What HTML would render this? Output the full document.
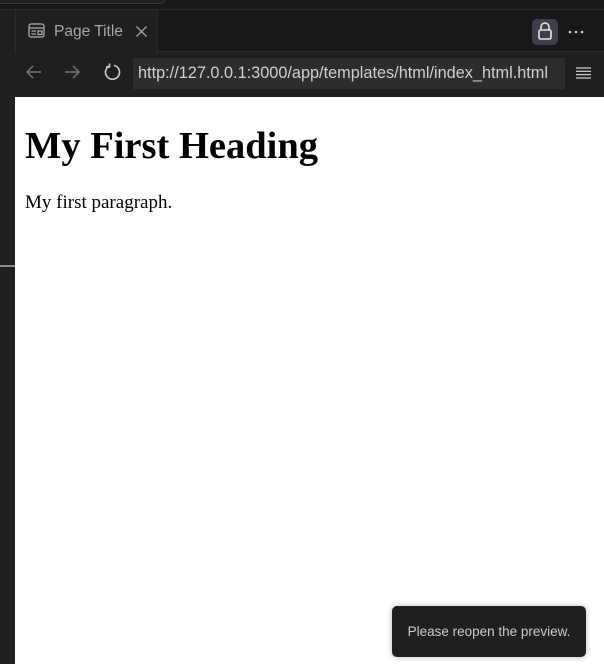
<!DOCTYPE html>
<html><head><style>
*{margin:0;padding:0;box-sizing:border-box}
body{width:604px;height:664px;overflow:hidden;background:#1f1f1f;position:relative;font-family:"Liberation Sans",sans-serif}
.top{position:absolute;left:0;top:0;width:604px;height:10px;background:#181818;border-bottom:1px solid #2b2b2b}
.topbox{position:absolute;left:-5px;top:-8px;width:170px;height:12px;border:1px solid #3a3a3a;border-radius:4px;background:#1f1f1f}
.side{position:absolute;left:0;top:10px;width:15px;height:654px;background:#1f1f1f}
.sideline{position:absolute;left:0;top:255px;width:15px;height:2px;background:#8a8a8a}
.tabbar{position:absolute;left:15px;top:10px;width:589px;height:42px;background:#181818;border-bottom:1px solid #2b2b2b}
.tab{position:absolute;left:15px;top:10px;width:143px;height:43px;background:#1f1f1f;border-left:1px solid #2b2b2b;border-right:1px solid #2b2b2b}
.tab span{position:absolute;left:38px;top:13px;color:#a8a8a8;font-size:15.5px}
.tb{position:absolute;left:15px;top:53px;width:589px;height:44px;background:#1f1f1f}
.url{position:absolute;left:133px;top:58px;width:432px;height:31px;background:#2d2d2d;color:#d0d0d0;font-size:16.3px;line-height:31px;padding-left:5px;white-space:nowrap;overflow:hidden}
.page{position:absolute;left:15px;top:97px;width:589px;height:567px;background:#fff;font-family:"Liberation Serif",serif;color:#000}
h1{position:absolute;left:10px;top:27px;font-size:38.5px;font-weight:bold;white-space:nowrap}
p{position:absolute;left:10px;top:95px;font-size:19px}
.toast{position:absolute;left:392px;top:606px;width:194px;height:51px;background:#1f1f1f;border-radius:5px;color:#cccccc;font-size:13.5px;line-height:51px;text-align:center;box-shadow:0 0 6px rgba(0,0,0,.3)}
</style></head><body>
<div class="top"><div class="topbox"></div></div>
<div class="side"><div class="sideline"></div></div>
<div class="tabbar"></div>
<div class="tab">
<svg style="position:absolute;left:12px;top:13px" width="17" height="16" viewBox="0 0 17 16" fill="none" stroke="#b0b0b0" stroke-width="1.2"><rect x="1" y="1" width="15" height="13" rx="2"/><line x1="1" y1="5" x2="16" y2="5"/><line x1="3.5" y1="8" x2="8" y2="8"/><line x1="3.5" y1="11" x2="8" y2="11"/><rect x="10" y="8" width="4" height="3.5"/></svg>
<span>Page Title</span>
<svg style="position:absolute;left:120px;top:16px" width="11" height="11" viewBox="0 0 11 11" stroke="#a0a0a0" stroke-width="1.3"><line x1="0.5" y1="0.5" x2="10.5" y2="10.5"/><line x1="10.5" y1="0.5" x2="0.5" y2="10.5"/></svg>
</div>
<div style="position:absolute;left:532px;top:19px;width:26px;height:26px;background:#3e3e4e;border-radius:5px"></div>
<svg style="position:absolute;left:537px;top:21px" width="16" height="20" viewBox="0 0 16 20" fill="none" stroke="#e8e4d8" stroke-width="1.6"><path d="M4 9V6a4 4 0 0 1 8 0v3"/><rect x="2" y="9" width="12" height="9" rx="1.5"/></svg>
<svg style="position:absolute;left:568px;top:30px" width="16" height="4" viewBox="0 0 16 4" fill="#d0d0d0"><circle cx="2" cy="2" r="1.3"/><circle cx="8" cy="2" r="1.3"/><circle cx="14" cy="2" r="1.3"/></svg>
<div class="tb"></div>
<svg style="position:absolute;left:25px;top:65px" width="17" height="14" viewBox="0 0 17 14" fill="none" stroke="#777" stroke-width="1.4"><path d="M16 7H2M8 1L2 7l6 6"/></svg>
<svg style="position:absolute;left:64px;top:65px" width="17" height="14" viewBox="0 0 17 14" fill="none" stroke="#777" stroke-width="1.4"><path d="M1 7h14M9 1l6 6-6 6"/></svg>
<svg style="position:absolute;left:103px;top:63px" width="18" height="18" viewBox="0 0 18 18" fill="none" stroke="#cfcfcf" stroke-width="1.6"><path d="M6 3.2A7 7 0 1 0 11 2.4"/><path d="M6.5 0.5v3.5H3"/></svg>
<div class="url">http://127.0.0.1:3000/app/templates/html/index_html.html</div>
<svg style="position:absolute;left:576px;top:67px" width="15" height="12" viewBox="0 0 15 12" stroke="#c8c8c8" stroke-width="1.3"><line x1="0" y1="1" x2="15" y2="1"/><line x1="0" y1="4.3" x2="15" y2="4.3"/><line x1="0" y1="7.6" x2="15" y2="7.6"/><line x1="0" y1="11" x2="15" y2="11"/></svg>
<div class="page"><h1>My First Heading</h1><p>My first paragraph.</p></div>
<div class="toast">Please reopen the preview.</div>
</body></html>
